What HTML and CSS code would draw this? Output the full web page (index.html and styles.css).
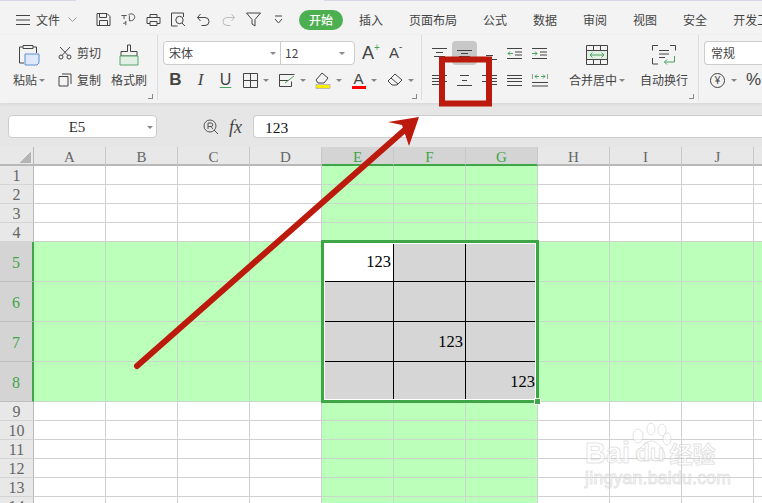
FILE: index.html
```html
<!DOCTYPE html>
<html lang="zh">
<head>
<meta charset="utf-8">
<title>WPS 表格</title>
<link rel="stylesheet" href="styles.css">
</head>
<body>
<div class="app">
  <div class="topstrip"><span class="ts-a"></span><span class="ts-b"></span><span class="ts-c"></span></div>
  <div class="menu">
    <svg class="i-ham" width="14" height="12" viewBox="0 0 14 12"><path d="M0 1.5h14M0 6h14M0 10.5h14"/></svg>
    <span class="file">文件</span>
    <svg class="i-chev" width="9" height="6" viewBox="0 0 9 6"><path d="M.5.5l4 4 4-4"/></svg>
    <span class="vsep"></span>
    <div class="qa">
      <svg width="16" height="15" viewBox="0 0 16 15"><path d="M1.5 1.5h10l3 3v9h-13zM4 1.5v4h7v-4M4 13.500v-5h8v5"/></svg>
      <svg width="18" height="15" viewBox="0 0 18 15"><path d="M1 3h6M4 3v4M9 2c4-2 7 0 7 3s-3 4-6 4v-6M6 9v5M6 11l-3 1"/></svg>
      <svg width="15" height="14" viewBox="0 0 15 14"><path d="M4 4V1.500h7V4M1 4.500h13v6h-3M4 10.500H1v-6M4 8.500h7v4H4z"/></svg>
      <svg width="16" height="15" viewBox="0 0 16 15"><path d="M13 5V1H1v13h6"/><circle cx="9" cy="8" r="3.700"/><path d="M11.500 11l3 3"/></svg>
      <svg width="14" height="13" viewBox="0 0 14 13"><path d="M1 4.500h7.500a4 4 0 010 8H5M4 1L1 4.500 4 8"/></svg>
      <svg class="dim" width="14" height="13" viewBox="0 0 14 13"><path d="M13 4.500H5.500a4 4 0 000 8H9M10 1l3 3.500L10 8"/></svg>
      <svg width="16" height="15" viewBox="0 0 16 15"><path d="M1 1h14L9.500 7.500V14l-3-2V7.500z"/></svg>
      <svg width="9" height="9" viewBox="0 0 9 9"><path d="M1 1h7M1 4l3.500 4L8 4"/></svg>
    </div>
    <span class="pill">开始</span>
    <nav class="tabs">
      <span>插入</span><span>页面布局</span><span>公式</span><span>数据</span><span>审阅</span><span>视图</span><span>安全</span><span>开发工具</span>
    </nav>
  </div>

  <div class="ribbon">
    <section class="group g1">
      <div class="body clip">
        <div class="bigcol paste">
          <div class="r1">
            <svg class="lift" width="24" height="24" viewBox="0 0 24 24"><path d="M6 4H2.500v16H7M16 4h3.500v6M6 2.500h10v3H6z" fill="none"/><path class="blue" d="M8 11h14v9l-2 2H8z"/></svg>
          </div>
          <div class="r2"><span>粘贴</span><i class="caret"></i></div>
        </div>
        <div class="smallcol">
          <div class="r1">
            <svg width="14" height="14" viewBox="0 0 14 14"><circle cx="3" cy="11" r="2"/><circle cx="11" cy="11" r="2"/><path d="M4 9.500L12 1M10 9.500L2 1"/></svg>
            <span>剪切</span>
          </div>
          <div class="r2">
            <svg width="14" height="14" viewBox="0 0 14 14"><path d="M4 1h9v10M1 3.500h9v9.500H1z"/></svg>
            <span>复制</span>
          </div>
        </div>
        <div class="bigcol brush">
          <div class="r1">
            <svg class="lift" width="20" height="23" viewBox="0 0 20 23"><path d="M8.500 1h3v6.500H18V12H2V7.500h6.500z"/><path class="gfill" d="M1 12h18v9H1z"/></svg>
          </div>
          <div class="r2"><span>格式刷</span></div>
        </div>
      </div>
      <i class="launcher"></i>
    </section>

    <section class="group g2">
      <div class="r1">
        <div class="combo fontcombo">
          <span class="cname">宋体</span><i class="caret"></i>
          <span class="csize">12</span><i class="caret"></i>
        </div>
        <span class="agrow">A<sup class="plus">+</sup></span>
        <span class="agrow small">A<sup>-</sup></span>
      </div>
      <div class="r2 tools">
        <span class="t24 bold">B</span>
        <span class="t24 ital">I</span>
        <span class="t24 under">U</span>
        <span class="t36"><svg width="15" height="15" viewBox="0 0 15 15"><path d="M.5.5h14v14H.5zM7.500.5v14M.5 7.500h14"/></svg><i class="caret"></i></span>
        <span class="t36"><svg width="16" height="15" viewBox="0 0 16 15"><path d="M.5 1.500h15M.5 7.500h9M.5 1.500v12h12v-5"/><path class="gstroke" d="M6 10l9-7"/></svg><i class="caret"></i></span>
        <span class="t36"><svg width="16" height="17" viewBox="0 0 16 17"><path d="M7 1l6 5-4 5H3L1 8z"/><path class="yellow" d="M1 12.500h14v4H1z"/></svg><i class="caret"></i></span>
        <span class="t36"><span class="fontc">A</span><i class="caret"></i></span>
        <span class="t36"><svg width="16" height="14" viewBox="0 0 16 14"><path d="M8 1l7 6-5 5H5L1 8zM4 5l7 6"/></svg><i class="caret"></i></span>
      </div>
      <i class="launcher"></i>
    </section>

    <section class="group g3">
      <div class="body">
        <div class="aligns">
          <div class="r1">
            <span class="ac"><svg width="15" height="13" viewBox="0 0 15 13"><path d="M0 1.500h15M4 5.500h7M2 9.500h11"/></svg></span>
            <span class="ac on"><svg width="15" height="13" viewBox="0 0 15 13"><path d="M0 3.500h15M4 6.500h7M2 9.500h11"/></svg></span>
            <span class="ac"><svg width="15" height="13" viewBox="0 0 15 13"><path d="M4 8.500h7M0 12.500h15"/></svg></span>
            <span class="ac"><svg width="15" height="13" viewBox="0 0 15 13"><path d="M0 1.500h15M8 5h7M8 8h7M0 11.500h15"/><path class="gstroke" d="M6 6.500H1M3 4.500l-2 2 2 2"/></svg></span>
            <span class="ac"><svg width="15" height="13" viewBox="0 0 15 13"><path d="M0 1.500h15M8 5h7M8 8h7M0 11.500h15"/><path class="gstroke" d="M0 6.500h5M3 4.500l2 2-2 2"/></svg></span>
          </div>
          <div class="r2">
            <span class="ac"><svg width="15" height="13" viewBox="0 0 15 13"><path d="M0 1.500h15M0 4.500h9M0 7.500h15M0 10.500h9"/></svg></span>
            <span class="ac"><svg width="15" height="13" viewBox="0 0 15 13"><path d="M3 1.500h9M5 6.500h5M0 11.500h15"/></svg></span>
            <span class="ac"><svg width="15" height="13" viewBox="0 0 15 13"><path d="M0 1.500h15M6 4.500h9M0 7.500h15M6 10.500h9"/></svg></span>
            <span class="ac"><svg width="15" height="13" viewBox="0 0 15 13"><path d="M0 1.500h15M0 4.500h15M0 7.500h15M0 11.500h15"/></svg></span>
            <span class="ac"><svg width="16" height="14" viewBox="0 0 16 14"><path d="M0 1v5M16 1v5M0 9.500h16M0 13h16"/><path class="gstroke" d="M3 3.500h4M9 3.500h4M5 1.500l-2 2 2 2M11 1.500l2 2-2 2"/></svg></span>
          </div>
        </div>
        <div class="bigcol merge">
          <div class="r1">
            <svg class="lift" width="22" height="20" viewBox="0 0 22 20"><path class="gfill" d="M.5 5.500h21v9H.5z"/><path d="M.5.500h21v19H.5zM.5 5.500h21M.5 14.500h21M7.500.500v5M14.500.500v5M7.500 14.500v5M14.500 14.500v5"/><path class="gstroke" d="M4 10h14M6.500 7.500L4 10l2.500 2.500M15.500 7.500L18 10l-2.500 2.500"/></svg>
          </div>
          <div class="r2"><span>合并居中</span><i class="caret"></i></div>
        </div>
        <div class="bigcol wrap">
          <div class="r1">
            <svg class="lift" width="24" height="20" viewBox="0 0 24 20"><path d="M6 .500H.5v5M18 .500h5.500v5M.5 13v6H6M7 5.500h10M7 9h10M7 12.500h6"/><path class="gstroke" d="M22.500 11v6h-10M15 14.500L12.500 17l2.500 2.500"/></svg>
          </div>
          <div class="r2"><span>自动换行</span></div>
        </div>
      </div>
      <i class="launcher"></i>
    </section>

    <section class="group g4">
      <div class="r1"><div class="combo numcombo">常规</div></div>
      <div class="r2 numtools">
        <span class="yen">¥</span><i class="caret"></i><span class="pct">%</span>
      </div>
    </section>
  </div>

  <div class="formula">
    <div class="namebox"><span>E5</span><i class="caret"></i></div>
    <svg class="lens" width="16" height="16" viewBox="0 0 16 16"><circle cx="7" cy="7" r="6"/><path d="M5 10V4h3a1.500 1.500 0 010 3.500H5M8 7.500l2 2.500M11 11l4 4"/></svg>
    <span class="fx">fx</span>
    <div class="finput">123</div>
  </div>

  <div class="sheet">
    <div class="row head">
      <div class="corner"></div>
      <div class="ch">A</div><div class="ch">B</div><div class="ch">C</div><div class="ch">D</div><div class="ch sel">E</div><div class="ch sel">F</div><div class="ch sel">G</div><div class="ch">H</div><div class="ch">I</div><div class="ch">J</div><div class="ch">K</div>
    </div>
    <div class="row"><div class="rh">1</div><div class="c"></div><div class="c"></div><div class="c"></div><div class="c"></div><div class="c g"></div><div class="c g"></div><div class="c g"></div><div class="c"></div><div class="c"></div><div class="c"></div><div class="c"></div></div>
    <div class="row"><div class="rh">2</div><div class="c"></div><div class="c"></div><div class="c"></div><div class="c"></div><div class="c g"></div><div class="c g"></div><div class="c g"></div><div class="c"></div><div class="c"></div><div class="c"></div><div class="c"></div></div>
    <div class="row"><div class="rh">3</div><div class="c"></div><div class="c"></div><div class="c"></div><div class="c"></div><div class="c g"></div><div class="c g"></div><div class="c g"></div><div class="c"></div><div class="c"></div><div class="c"></div><div class="c"></div></div>
    <div class="row"><div class="rh">4</div><div class="c"></div><div class="c"></div><div class="c"></div><div class="c"></div><div class="c g"></div><div class="c g"></div><div class="c g"></div><div class="c"></div><div class="c"></div><div class="c"></div><div class="c"></div></div>
    <div class="row tall"><div class="rh sel">5</div><div class="c g"></div><div class="c g"></div><div class="c g"></div><div class="c g"></div><div class="c s w">123</div><div class="c s"></div><div class="c s"></div><div class="c g"></div><div class="c g"></div><div class="c g"></div><div class="c g"></div></div>
    <div class="row tall"><div class="rh sel">6</div><div class="c g"></div><div class="c g"></div><div class="c g"></div><div class="c g"></div><div class="c s"></div><div class="c s"></div><div class="c s"></div><div class="c g"></div><div class="c g"></div><div class="c g"></div><div class="c g"></div></div>
    <div class="row tall"><div class="rh sel">7</div><div class="c g"></div><div class="c g"></div><div class="c g"></div><div class="c g"></div><div class="c s"></div><div class="c s">123</div><div class="c s"></div><div class="c g"></div><div class="c g"></div><div class="c g"></div><div class="c g"></div></div>
    <div class="row tall"><div class="rh sel">8</div><div class="c g"></div><div class="c g"></div><div class="c g"></div><div class="c g"></div><div class="c s"></div><div class="c s"></div><div class="c s">123</div><div class="c g"></div><div class="c g"></div><div class="c g"></div><div class="c g"></div></div>
    <div class="row"><div class="rh">9</div><div class="c"></div><div class="c"></div><div class="c"></div><div class="c"></div><div class="c g"></div><div class="c g"></div><div class="c g"></div><div class="c"></div><div class="c"></div><div class="c"></div><div class="c"></div></div>
    <div class="row"><div class="rh">10</div><div class="c"></div><div class="c"></div><div class="c"></div><div class="c"></div><div class="c g"></div><div class="c g"></div><div class="c g"></div><div class="c"></div><div class="c"></div><div class="c"></div><div class="c"></div></div>
    <div class="row"><div class="rh">11</div><div class="c"></div><div class="c"></div><div class="c"></div><div class="c"></div><div class="c g"></div><div class="c g"></div><div class="c g"></div><div class="c"></div><div class="c"></div><div class="c"></div><div class="c"></div></div>
    <div class="row"><div class="rh">12</div><div class="c"></div><div class="c"></div><div class="c"></div><div class="c"></div><div class="c g"></div><div class="c g"></div><div class="c g"></div><div class="c"></div><div class="c"></div><div class="c"></div><div class="c"></div></div>
    <div class="row"><div class="rh">13</div><div class="c"></div><div class="c"></div><div class="c"></div><div class="c"></div><div class="c g"></div><div class="c g"></div><div class="c g"></div><div class="c"></div><div class="c"></div><div class="c"></div><div class="c"></div></div>
    <div class="row"><div class="rh">14</div><div class="c"></div><div class="c"></div><div class="c"></div><div class="c"></div><div class="c g"></div><div class="c g"></div><div class="c g"></div><div class="c"></div><div class="c"></div><div class="c"></div><div class="c"></div></div>
    <div class="frame"><i class="handle"></i></div>
  </div>
</div>

<div class="watermark">
  <svg class="paw" width="42" height="42" viewBox="0 0 42 42"><ellipse cx="21" cy="8" rx="4" ry="6"/><ellipse cx="32" cy="9" rx="4" ry="6"/><ellipse cx="8" cy="15" rx="5" ry="7"/><ellipse cx="37" cy="18" rx="4" ry="6"/><path d="M21 20c6 0 14 9 14 15 0 6-8 5-14 4-7 1-14 2-14-4 0-6 8-15 14-15z"/></svg>
  <div class="wm-line"><span class="wm-b">Bai</span><span class="wm-d">du</span><span class="wm-j">经验</span></div>
  <div class="wm-url">jingyan.baidu.com</div>
</div>

<svg class="annot" width="762" height="503" viewBox="0 0 762 503">
  <path class="a-box" d="M442 59.500h47V103.500h-47z"/>
  <path class="a-line" d="M137 366L408 127"/>
  <path class="a-head" d="M419 117L388 122 402 125 409 146z"/>
</svg>
</body>
</html>
```
FILE: styles.css
```css
* { box-sizing: border-box; }
html, body { margin: 0; padding: 0; }
body {
  width: 762px;
  height: 503px;
  overflow: hidden;
  position: relative;
  background: #fff;
  color: #444;
  font: 12px/16px "Noto Sans CJK SC", "Liberation Sans", sans-serif;
}
.app { width: 762px; height: 503px; display: flex; flex-direction: column; overflow: hidden; }
svg { fill: none; stroke: #444; stroke-width: 1; flex: none; display: block; }
i { display: block; font-style: normal; }

/* title strip */
.topstrip { height: 1px; display: flex; flex: none; background: #f3f3f3; }
.ts-a { width: 76px; background: #d6d8e8; }
.ts-b { width: 248px; }
.ts-c { flex: 1; background: #d6d8e8; }

/* menu bar */
.menu { height: 34px; flex: none; display: flex; align-items: center; padding: 3px 0 0 16px; background: #f3f3f3; white-space: nowrap; }
.file { margin-left: 6px; font-size: 12px; }
.i-chev { margin-left: 8px; stroke: #999; }
.vsep { width: 1px; height: 24px; margin-left: 9px; margin-right: 5px; background: #c8c8c8; }
.qa { display: flex; align-items: center; }
.qa svg { box-sizing: content-box; padding: 0 calc((25px - 16px) / 2); width: 16px; }
.qa .dim { stroke: #bbb; }
.pill { width: 44px; height: 20px; margin-left: 8px; border-radius: 10px; background: #4caf50; color: #fff; font-weight: 500; text-align: center; line-height: 20px; flex: none; }
.tabs { display: flex; gap: 26px; margin-left: 16px; flex: none; }

/* ribbon */
.ribbon { height: 68px; flex: none; display: flex; background: #f3f3f3; box-shadow: 0 1px 3px rgba(0,0,0,.08); position: relative; z-index: 1; }
.group { display: flex; flex-direction: column; padding-top: 6px; height: 65px; border-right: 1px solid #dcdcdc; flex: none; }
.body { display: flex; }
.r1 { height: 24px; display: flex; align-items: center; }
.r2 { height: 24px; margin-top: 3px; display: flex; align-items: center; }
.launcher { width: 5px; height: 5px; margin: 2px 4px 0 auto; border-right: 1px solid #888; border-bottom: 1px solid #888; flex: none; }
.caret { width: 0; height: 0; border: 3px solid transparent; border-top: 3px solid #888; border-bottom: 0; margin-left: 2px; flex: none; }
.g1 { width: 158px; }
.clip { padding-left: 10px; }
.bigcol .r1, .bigcol .r2 { justify-content: center; }
.lift { margin-top: 4px; }
.paste { width: 38px; }
.paste svg .blue { fill: #dfe8f8; stroke: #5b8fd6; }
.smallcol { width: 43px; margin-left: 10px; }
.smallcol .r1, .smallcol .r2 { gap: 5px; }
.brush { width: 36px; margin-left: 10px; }
.gfill { fill: #e2efe4; stroke: #5aa56a; }
.gstroke { stroke: #4aa35d; }
.yellow { fill: #ffee00; stroke: #bbb; }

.g2 { width: 264px; padding-left: 5px; }
.combo { height: 24px; background: #fff; border: 1px solid #ccc; border-radius: 4px; display: flex; align-items: center; }
.fontcombo { width: 192px; }
.cname { width: 106px; padding-left: 5px; }
.csize { width: 59px; padding-left: 4px; margin-left: 4px; border-left: 1px solid #ccc; font-size: 12px; line-height: 22px; height: 22px; }
.fontcombo .caret { margin-left: 0; }
.agrow { font: 18px/24px "Liberation Sans", sans-serif; margin-left: 7px; width: 20px; position: relative; }
.agrow sup { font-size: 10px; line-height: 0; vertical-align: 8px; color: #555; }
.agrow .plus { color: #4aa35d; }
.agrow.small { font-size: 15px; margin-left: 7px; }
.t24 { width: 25px; text-align: center; font: 16px/24px "Liberation Sans", sans-serif; }
.bold { font-weight: 700; font-size: 17px; }
.ital { font-family: "Liberation Serif", serif; font-style: italic; font-size: 17px; }
.under { text-decoration: underline; text-decoration-color: #4aa35d; text-underline-offset: 2px; }
.tools .t36:first-of-type { margin-left: 2px; }
.t36 { width: 36px; display: flex; align-items: center; justify-content: center; gap: 3px; }
.fontc { font: 15px/14px "Liberation Sans", sans-serif; border-bottom: 3px solid #f00; width: 14px; text-align: center; }

.g3 { width: 277px; padding-left: 5px; }
.aligns { width: 125px; }
.ac { width: 25px; height: 24px; display: flex; align-items: center; justify-content: center; border-radius: 4px; }
.ac.on { background: #c8c8c8; }
.merge { width: 64px; margin-left: 13px; }
.wrap { width: 52px; margin-left: 9px; }

.g4 { flex: 1; padding-left: 5px; border-right: 0; }
.numcombo { width: 90px; padding-left: 6px; border-right: 0; }
.numtools { padding-left: 6px; }
.yen { width: 15px; height: 15px; border: 1px solid #444; border-radius: 50%; font: 10px/13px "Liberation Sans", sans-serif; text-align: center; }
.numtools .caret { margin-left: 6px; }
.pct { font: 17px/20px "Liberation Sans", sans-serif; margin-left: 9px; }

/* formula bar */
.formula { height: 44px; flex: none; background: #e6e6e6; display: flex; align-items: flex-start; padding: 12px 0 0 8px; }
.namebox { width: 149px; height: 23px; background: #fff; border: 1px solid #ccc; border-radius: 4px; display: flex; align-items: center; padding: 2px 3px 0 0; font: 15px/19px "Liberation Serif", serif; color: #333; }
.namebox span { flex: 1; text-align: center; }
.lens { margin: 4px 0 0 46px; stroke: #555; }
.fx { width: 24px; margin-left: 10px; font: italic 18px/24px "Liberation Serif", serif; color: #444; }
.finput { flex: 1; height: 23px; background: #fff; border: 1px solid #ccc; border-right: 0; border-radius: 4px 0 0 4px; padding: 2px 0 0 11px; font: 15.500px/19px "Liberation Serif", serif; color: #111; }

/* sheet */
.sheet { position: relative; flex: 1; overflow: hidden; background: #fff; font-family: "Liberation Serif", serif; }
.row { display: flex; height: 19px; }
.row.tall { height: 40px; }
.rh { width: 34px; flex: none; background: #e8e8e8; border-right: 1px solid #b8b8b8; border-bottom: 1px solid #d4d4d4; color: #666; font-size: 16px; padding-top: 2px; display: flex; align-items: center; justify-content: center; }
.rh.sel { background: #d4d4d4; color: #3fa648; border-right: 2px solid #3fa648; border-bottom-color: #bfbfbf; }
.corner { width: 34px; flex: none; border-right: 1px solid #b8b8b8; border-bottom: 2px solid #b8b8b8; background: linear-gradient(135deg, transparent 50%, #b4b4b4 50%) no-repeat 20px 5px / 11px 11px, #e8e8e8; }
.ch { width: 72px; flex: none; background: #e8e8e8; border-right: 1px solid #c8c8c8; border-bottom: 2px solid #b8b8b8; color: #666; font-size: 15px; line-height: 19px; padding-top: 1px; text-align: center; }
.ch.sel { background: #d4d4d4; color: #3fa648; border-bottom: 2px solid #3fa648; }
.c { width: 72px; flex: none; border-right: 1px solid #d0d0d0; border-bottom: 1px solid #d0d0d0; font-size: 16.500px; color: #000; padding-right: 2px; display: flex; align-items: center; justify-content: flex-end; }
.c.g { background: #bbffbb; border-color: #c9d9c9; }
.c.s { background: #d6d6d6; border-color: #000; }
.c.w { background: #fff; }
.frame { position: absolute; left: 321px; top: 93px; width: 218px; height: 163px; border: 3px solid #3fa648; box-shadow: inset 0 0 0 1px #fff; }
.handle { position: absolute; right: -5px; bottom: -5px; width: 7px; height: 7px; background: #3fa648; border: 1px solid #fff; }

/* watermark */
.watermark { position: absolute; left: 585px; top: 421px; width: 140px; color: rgba(255,255,255,.55); -webkit-text-stroke: 1px rgba(185,185,185,.4); font-family: "Liberation Sans", sans-serif; }
.paw { margin-left: 45px; fill: rgba(255,255,255,.55); stroke: rgba(185,185,185,.4); }
.wm-line { margin-top: -23px; display: flex; align-items: center; height: 26px; font-weight: 700; font-size: 29px; line-height: 26px; white-space: nowrap; }
.wm-d { margin-left: 5px; font-size: 24px; }
.wm-j { margin-left: 5px; font: 700 23px/26px "Noto Sans CJK SC", sans-serif; }
.wm-url { margin-top: 3px; font-size: 17.500px; line-height: 18px; white-space: nowrap; letter-spacing: .3px; }

/* annotation */
.annot { position: absolute; left: 0; top: 0; z-index: 5; pointer-events: none; }
.a-box { stroke: #bb1a0c; stroke-width: 6; fill: none; }
.a-line { stroke: #bb1a0c; stroke-width: 6; stroke-linecap: round; }
.a-head { fill: #bb1a0c; stroke: none; }
```
